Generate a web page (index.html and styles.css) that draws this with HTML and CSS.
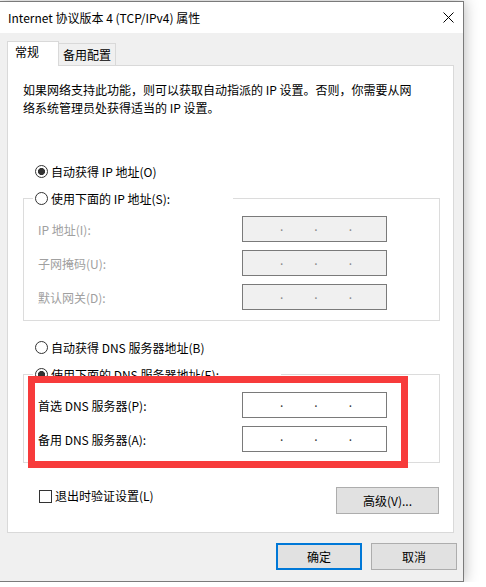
FILE: index.html
```html
<!DOCTYPE html>
<html lang="zh-CN">
<head>
  <meta charset="UTF-8" />
  <title>Internet 协议版本 4 (TCP/IPv4) 属性</title>
  <link rel="stylesheet" href="styles.css">
</head>
<body>
  <div class="window">
    <div class="titlebar">
      <span class="title">Internet 协议版本 4 (TCP/IPv4) 属性</span>
      <svg class="close" width="11" height="11" viewBox="0 0 11 11">
        <path d="M0.5 0.5 L10.5 10.5 M10.5 0.5 L0.5 10.5" stroke="#000" stroke-width="1" fill="none"/>
      </svg>
    </div>

    <div class="body">
      <div class="tabs">
        <div class="tab active">常规</div>
        <div class="tab">备用配置</div>
      </div>

      <div class="panel">
        <p class="desc">如果网络支持此功能，则可以获取自动指派的 IP 设置。否则，你需要从网<br>络系统管理员处获得适当的 IP 设置。</p>

        <div class="radio-row first"><span class="radio checked"></span>自动获得 IP 地址(O)</div>

        <fieldset class="group">
          <legend class="legend-ip"><div class="legend-row"><span class="radio"></span>使用下面的 IP 地址(S):</div></legend>
          <div class="field disabled">
            <label>IP 地址(I):</label>
            <div class="ip-box"><span>.</span><span>.</span><span>.</span></div>
          </div>
          <div class="field disabled">
            <label>子网掩码(U):</label>
            <div class="ip-box"><span>.</span><span>.</span><span>.</span></div>
          </div>
          <div class="field disabled">
            <label>默认网关(D):</label>
            <div class="ip-box"><span>.</span><span>.</span><span>.</span></div>
          </div>
        </fieldset>

        <div class="radio-row dns"><span class="radio"></span>自动获得 DNS 服务器地址(B)</div>

        <fieldset class="group">
          <legend class="legend-dns"><div class="legend-row"><span class="radio checked"></span>使用下面的 DNS 服务器地址(E):</div></legend>
          <div class="field">
            <label>首选 DNS 服务器(P):</label>
            <div class="ip-box"><span>.</span><span>.</span><span>.</span></div>
          </div>
          <div class="field">
            <label>备用 DNS 服务器(A):</label>
            <div class="ip-box"><span>.</span><span>.</span><span>.</span></div>
          </div>
        </fieldset>

        <div class="options">
          <div class="check"><span class="box"></span>退出时验证设置(L)</div>
          <button class="btn advanced">高级(V)...</button>
        </div>

        <div class="highlight"></div>
      </div>

      <div class="footer">
        <button class="btn primary">确定</button>
        <button class="btn">取消</button>
      </div>
    </div>
  </div>
</body>
</html>
```

FILE: styles.css
```css
* {
  box-sizing: border-box;
}
body {
  margin: 0;
  background: #fff;
  font-family: "Noto Sans CJK SC", sans-serif;
  font-size: 12px;
  color: #000;
  overflow: hidden;
}
.window {
  width: 464px;
  height: 581px;
  margin-top: 1px;
  background: #f0f0f0;
  border: 1px solid #7a7a7a;
  border-left: none;
  box-shadow: 0 0 14px rgba(0,0,0,0.3);
}
.titlebar {
  height: 31px;
  background: #fff;
  display: flex;
  align-items: center;
  justify-content: space-between;
  padding: 0 9px 0 8px;
}
.close {
  display: block;
  margin-top: -1px;
}
.body {
  padding: 8px 0 0 7px;
}
.tabs {
  display: flex;
  align-items: flex-end;
}
.tab {
  border: 1px solid #d9d9d9;
  border-bottom: none;
  line-height: 18px;
  height: 22px;
  width: 57px;
  padding: 2px 0 0 4px;
  border-left: none;
}
.tab.active {
  position: relative;
  z-index: 1;
  background: #fff;
  border-left: 1px solid #d9d9d9;
  height: 25px;
  width: 52px;
  margin-bottom: -1px;
  padding: 1px 0 0 7px;
}
.panel {
  position: relative;
  width: 447px;
  height: 468px;
  background: #fff;
  border: 1px solid #d9d9d9;
  padding: 15px 0 0 15px;
}
.desc {
  margin: 0;
  line-height: 18px;
  white-space: nowrap;
}
.radio-row, .legend-row {
  display: flex;
  align-items: center;
  gap: 3px;
  white-space: nowrap;
}
.radio-row {
  height: 18px;
  padding-left: 12px;
}
.radio-row.first {
  margin-top: 45px;
}
.radio-row.dns {
  margin-top: 17px;
}
.legend-row {
  height: 20px;
}
.radio {
  width: 13px;
  height: 13px;
  border: 1px solid #333;
  border-radius: 50%;
  background: #fff;
  flex: none;
}
.radio.checked {
  background: radial-gradient(circle, #333 3.3px, #fff 3.8px);
}
.group {
  width: 417px;
  min-width: 0;
  margin: 8px 0 0;
  padding: 0 0 10px 9px;
  border: 1px solid #dcdcdc;
}
.group legend {
  padding: 0 0 0 2px;
}
.legend-ip {
  width: 200px;
}
.legend-dns {
  width: 248px;
}
.field {
  display: flex;
  align-items: center;
  height: 26px;
  margin-top: 8px;
  padding-left: 5px;
}
.field label {
  width: 204px;
}
.field.disabled label {
  color: #a0a0a0;
}
.ip-box {
  width: 145px;
  height: 26px;
  border: 1px solid #7a7a7a;
  background: #fff;
  display: flex;
  justify-content: space-between;
  padding: 0 34px 0 37px;
  line-height: 18px;
  color: #333;
}
.field.disabled .ip-box {
  background: #f0f0f0;
  color: #888;
}
.options {
  width: 416px;
  margin-top: 24px;
  display: flex;
  justify-content: space-between;
  align-items: flex-start;
}
.check {
  display: flex;
  align-items: center;
  gap: 3px;
  padding-left: 16px;
  margin-top: 1px;
  line-height: 16px;
}
.box {
  width: 13px;
  height: 13px;
  border: 1px solid #333;
  background: #fff;
}
.btn {
  width: 86px;
  height: 27px;
  padding: 0;
  background: #e1e1e1;
  border: 1px solid #adadad;
  font: inherit;
  color: #000;
}
.btn.advanced {
  width: 103px;
}
.btn.primary {
  border: 2px solid #0078d7;
}
.footer {
  display: flex;
  justify-content: flex-end;
  gap: 9px;
  margin-top: 10px;
  padding-right: 6px;
}
.highlight {
  position: absolute;
  left: 20px;
  top: 310px;
  width: 380px;
  height: 92px;
  border: 7px solid #f73b3b;
}
```
